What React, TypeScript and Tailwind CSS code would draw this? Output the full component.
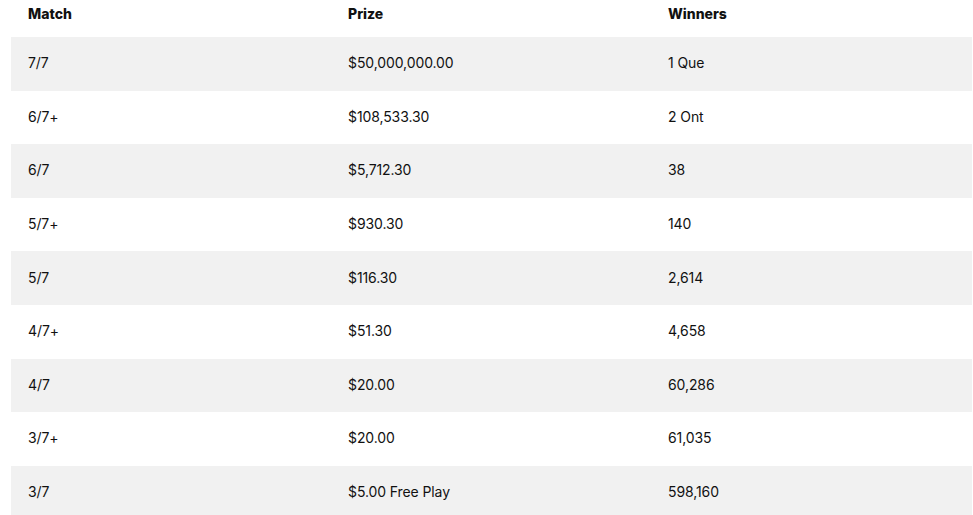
const rows = [
  { match: "7/7", prize: "$50,000,000.00", winners: "1 Que" },
  { match: "6/7+", prize: "$108,533.30", winners: "2 Ont" },
  { match: "6/7", prize: "$5,712.30", winners: "38" },
  { match: "5/7+", prize: "$930.30", winners: "140" },
  { match: "5/7", prize: "$116.30", winners: "2,614" },
  { match: "4/7+", prize: "$51.30", winners: "4,658" },
  { match: "4/7", prize: "$20.00", winners: "60,286" },
  { match: "3/7+", prize: "$20.00", winners: "61,035" },
  { match: "3/7", prize: "$5.00 Free Play", winners: "598,160" },
];

const App = () => {
  return (
    <div className="bg-white text-[#111] font-['Inter',sans-serif] pl-[11px]">
      <table className="w-[961px] border-collapse table-fixed">
        <thead>
          <tr className="h-[37px]">
            <th className="w-[320px] text-left align-top pt-[3px] pl-[17px] text-[14px] font-extrabold">Match</th>
            <th className="w-[320px] text-left align-top pt-[3px] pl-[17px] text-[14px] font-extrabold">Prize</th>
            <th className="text-left align-top pt-[3px] pl-[17px] text-[14px] font-extrabold">Winners</th>
          </tr>
        </thead>
        <tbody>
          {rows.map((row, i) => (
            <tr key={row.match} className={i % 2 === 0 ? "h-[53.6px] bg-[#f1f1f1]" : "h-[53.6px] bg-white"}>
              <td className="pl-[17px] pb-[2px] text-[14px] tracking-[-0.1px]">{row.match}</td>
              <td className="pl-[17px] pb-[2px] text-[14px] tracking-[-0.1px]">{row.prize}</td>
              <td className="pl-[17px] pb-[2px] text-[14px] tracking-[-0.1px]">{row.winners}</td>
            </tr>
          ))}
        </tbody>
      </table>
    </div>
  );
};

export default App;
